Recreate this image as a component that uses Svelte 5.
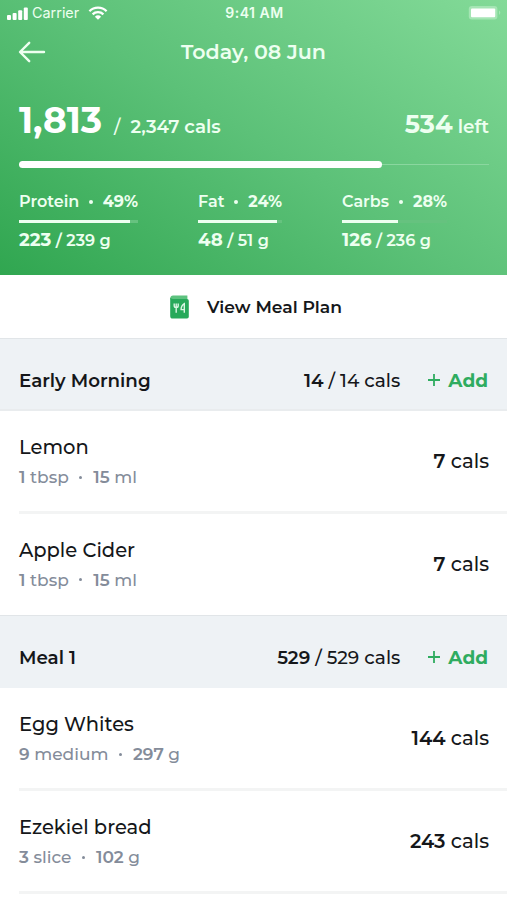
<script lang="ts">
    type Macro = {
        name: string;
        percent: number;
        value: number;
        goal: number;
        fill: number;
    };

    type Food = {
        name: string;
        amount: number;
        unit: string;
        size: number;
        sizeUnit: string;
        cals: number;
    };

    type Meal = {
        name: string;
        cals: number;
        goal: number;
        foods: Food[];
    };

    const macros: Macro[] = [
        { name: "Protein", percent: 49, value: 223, goal: 239, fill: 93.5 },
        { name: "Fat", percent: 24, value: 48, goal: 51, fill: 94 },
        { name: "Carbs", percent: 28, value: 126, goal: 236, fill: 53.4 },
    ];

    const meals: Meal[] = [
        {
            name: "Early Morning",
            cals: 14,
            goal: 14,
            foods: [
                { name: "Lemon", amount: 1, unit: "tbsp", size: 15, sizeUnit: "ml", cals: 7 },
                { name: "Apple Cider", amount: 1, unit: "tbsp", size: 15, sizeUnit: "ml", cals: 7 },
            ],
        },
        {
            name: "Meal 1",
            cals: 529,
            goal: 529,
            foods: [
                { name: "Egg Whites", amount: 9, unit: "medium", size: 297, sizeUnit: "g", cals: 144 },
                { name: "Ezekiel bread", amount: 3, unit: "slice", size: 102, sizeUnit: "g", cals: 243 },
            ],
        },
    ];

    const eaten = 1813;
    const target = 2347;
    const format = (value: number) => value.toLocaleString("en-US");
</script>

<div class="screen">
    <header class="summary">
        <div class="status-bar">
            <div class="carrier">
                <svg class="signal" viewBox="0 0 21 13" aria-hidden="true">
                    <rect x="0" y="8" width="4" height="5" rx="1" />
                    <rect x="5.6" y="6" width="4" height="7" rx="1" />
                    <rect x="11.2" y="3.2" width="4" height="9.8" rx="1" />
                    <rect x="16.8" y="0.5" width="4" height="12.5" rx="1" />
                </svg>
                <span>Carrier</span>
                <svg class="wifi" viewBox="0 0 20 14" aria-hidden="true">
                    <path d="M1.4 5.2a12.3 12.3 0 0 1 17.2 0" />
                    <path d="M4.6 8.3a7.8 7.8 0 0 1 10.8 0" />
                    <path class="dot" d="M6.9 10.7a4.6 4.6 0 0 1 6.2 0L10 13.8z" />
                </svg>
            </div>
            <span class="clock">9:41 AM</span>
            <svg class="battery" viewBox="0 0 34 16" aria-hidden="true">
                <rect class="case" x="0.8" y="1" width="28.6" height="13.4" rx="3" />
                <rect x="3" y="3.4" width="24.2" height="8.8" rx="1" />
                <path class="tip" d="M31 5.6q2.6 2 0 4.4z" />
            </svg>
        </div>

        <div class="title-bar">
            <button type="button" class="back" aria-label="Back">
                <svg viewBox="0 0 28 22" aria-hidden="true">
                    <path d="M26 11H2.4M11.2 1.8 2 11l9.2 9.2" />
                </svg>
            </button>
            <h1>Today, 08 Jun</h1>
        </div>

        <div class="totals">
            <p><strong class="eaten">{format(eaten)}</strong><span class="slash">/</span><span class="target">{format(target)} cals</span></p>
            <p class="left"><strong>{target - eaten}</strong> left</p>
        </div>
        <div class="progress">
            <div class="progress-fill" style:width="{(eaten / target) * 100}%"></div>
        </div>

        <div class="macros">
            {#each macros as macro}
                <div class="macro">
                    <p class="macro-label">{macro.name}<i></i><strong>{macro.percent}%</strong></p>
                    <div class="macro-track">
                        <div class="macro-fill" style:width="{macro.fill}%"></div>
                    </div>
                    <p class="macro-value"><strong>{macro.value}</strong> / {macro.goal} g</p>
                </div>
            {/each}
        </div>
    </header>

    <button type="button" class="meal-plan">
        <svg viewBox="0 0 19 24" aria-hidden="true">
            <path class="cover-back" d="M3 0.4h14.4v4H0.4V3A2.6 2.6 0 0 1 3 0.4z" />
            <path class="cover" d="M0.2 2.6Q0.8 4 2.8 4H17a1.8 1.8 0 0 1 1.8 1.8v16A1.8 1.8 0 0 1 17 23.6H2.8A2.6 2.6 0 0 1 0.2 21z" />
            <path class="cutlery" d="M4.2 8.6v2.2q0 1.8 2 1.8t2-1.8V8.6M6.2 8.6v9.2M14.3 17.8V8.6q-3.2 1.8-3.2 6h3.2" />
        </svg>
        <span>View Meal Plan</span>
    </button>

    {#each meals as meal}
        <section class="meal">
            <div class="meal-header">
                <h2>{meal.name}</h2>
                <span class="meal-cals"><strong>{meal.cals}</strong> / {meal.goal} cals</span>
                <button type="button" class="add">
                    <svg viewBox="0 0 12 12" aria-hidden="true">
                        <path d="M6 0v12M0 6h12" />
                    </svg>
                    <span>Add</span>
                </button>
            </div>
            <ul>
                {#each meal.foods as food}
                    <li>
                        <div>
                            <h3>{food.name}</h3>
                            <p class="portion">
                                <strong>{food.amount}</strong> {food.unit}<i></i><strong>{food.size}</strong> {food.sizeUnit}
                            </p>
                        </div>
                        <span class="food-cals"><strong>{food.cals}</strong> cals</span>
                    </li>
                {/each}
            </ul>
        </section>
    {/each}
</div>

<style>
    :global(body) {
        margin: 0;
        overflow: hidden;
        background: #fff;
    }

    .screen {
        width: 100%;
        height: 900px;
        overflow: hidden;
        font-family: Montserrat, Inter, sans-serif;
        font-weight: 500;
        color: #15171a;
        background: #fff;
    }

    h1,
    h2,
    h3,
    p,
    ul {
        margin: 0;
        padding: 0;
        font-weight: 500;
    }

    button {
        padding: 0;
        border: 0;
        background: none;
        font: inherit;
        color: inherit;
    }

    svg {
        display: block;
        flex: none;
    }

    .summary {
        box-sizing: border-box;
        height: 275px;
        color: #edfff0;
        background: linear-gradient(33deg, #30a650 0%, #5cc178 50%, #83da98 100%);
    }

    .status-bar {
        display: grid;
        grid-template-columns: 1fr auto 1fr;
        align-items: center;
        height: 26px;
        padding: 0 5px 0 7px;
        font-family: Inter, sans-serif;
        font-size: 14.4px;
        font-weight: 400;
        line-height: 26px;
    }

    .carrier {
        display: flex;
        align-items: center;
    }

    .signal {
        width: 21px;
        height: 13px;
        margin-right: 4px;
        fill: #fff;
    }

    .wifi {
        width: 20px;
        height: 14px;
        margin-left: 9px;
        fill: none;
        stroke: #fff;
        stroke-width: 2.3;
    }

    .wifi .dot {
        fill: #fff;
        stroke: none;
    }

    .clock {
        font-weight: 600;
        font-size: 14px;
        letter-spacing: 0.5px;
    }

    .battery {
        justify-self: end;
        width: 34px;
        height: 16px;
        fill: #fff;
    }

    .battery .case {
        fill: #a5e5b4;
    }

    .battery .tip {
        fill: #a5e5b4;
    }

    .title-bar {
        display: grid;
        grid-template-columns: 28px 1fr 28px;
        align-items: center;
        height: 52px;
        padding: 0 18px;
    }

    .back svg {
        width: 28px;
        height: 22px;
        fill: none;
        stroke: currentColor;
        stroke-width: 2.4;
        stroke-linecap: round;
        stroke-linejoin: round;
    }

    h1 {
        padding-bottom: 2px;
        font-size: 20.6px;
        font-weight: 600;
        text-align: center;
    }

    .totals {
        display: flex;
        align-items: baseline;
        justify-content: space-between;
        height: 60px;
        padding: 20px 18px 0 19px;
        box-sizing: border-box;
    }

    .eaten {
        font-size: 36px;
        line-height: 44px;
        font-weight: 700;
        color: #fff;
    }

    .slash {
        margin: 0 10px 0 12px;
        font-size: 18px;
    }

    .target {
        font-size: 18.3px;
        font-weight: 600;
    }

    .left {
        font-size: 18.4px;
        font-weight: 600;
    }

    .left strong {
        font-size: 25.6px;
        font-weight: 700;
    }

    .progress {
        display: flex;
        align-items: center;
        height: 7px;
        margin: 23px 18px 0 19px;
        background: linear-gradient(#8ad79f, #8ad79f) center / 100% 1px no-repeat;
    }

    .progress-fill {
        height: 7px;
        border-radius: 4px;
        background: #fff;
    }

    .macros {
        display: grid;
        grid-template-columns: 119px 84px 105px;
        column-gap: 60px;
        padding: 23px 0 0 19px;
    }

    .macro-label {
        display: flex;
        align-items: center;
        justify-content: space-between;
        font-size: 16px;
        font-weight: 600;
        line-height: 22px;
        white-space: nowrap;
    }

    .macro-label i {
        width: 4px;
        height: 4px;
        border-radius: 50%;
        background: currentColor;
    }

    .macro-label strong {
        font-weight: 700;
    }

    .macro-track {
        height: 3px;
        margin-top: 7px;
        background: #66c27f;
    }

    .macro-fill {
        height: 3px;
        background: #edfff0;
    }

    .macro-value {
        margin-top: 6px;
        font-size: 16.1px;
        font-weight: 600;
        line-height: 22px;
        white-space: nowrap;
    }

    .macro-value strong {
        font-size: 18.3px;
        font-weight: 700;
    }

    .meal-plan {
        display: flex;
        align-items: center;
        width: 100%;
        height: 63px;
        padding-left: 170px;
    }

    .meal-plan svg {
        width: 19px;
        height: 24px;
        margin-right: 18px;
    }

    .meal-plan .cover-back {
        fill: #5dc27f;
    }

    .meal-plan .cover {
        fill: #27a95a;
    }

    .meal-plan .cutlery {
        fill: none;
        stroke: #d9f5e2;
        stroke-width: 1.4;
    }

    .meal-plan span {
        font-size: 17.2px;
        font-weight: 600;
    }

    .meal-header {
        display: flex;
        align-items: center;
        box-sizing: border-box;
        height: 73px;
        padding: 10px 19px 0 19px;
        border-top: 1px solid #e1e5e8;
        background: #eef2f5;
    }

    .meal:first-of-type .meal-header {
        padding-top: 12px;
        border-bottom: 2px solid #e9ecee;
    }

    h2 {
        flex: 1;
        font-size: 18.3px;
        font-weight: 600;
    }

    .meal-cals {
        font-size: 18.5px;
    }

    strong {
        font-weight: 600;
    }

    .add {
        display: flex;
        align-items: center;
        margin-left: 28px;
        color: #2fac60;
        font-size: 18.5px;
        font-weight: 700;
    }

    .add svg {
        width: 12px;
        height: 12px;
        margin-right: 8px;
        fill: none;
        stroke: currentColor;
        stroke-width: 1.8;
    }

    ul {
        list-style: none;
    }

    li {
        display: flex;
        align-items: center;
        justify-content: space-between;
        box-sizing: border-box;
        height: 103px;
        margin-left: 19px;
        padding-right: 18px;
        border-bottom: 3px solid #f3f4f4;
    }

    .meal:first-of-type li:last-child {
        height: 101px;
        padding-bottom: 2px;
        border-bottom: 0;
    }

    h3 {
        font-size: 19.5px;
        line-height: 28px;
    }

    .portion {
        display: flex;
        align-items: center;
        margin-top: 4px;
        font-size: 17px;
        line-height: 24px;
        white-space: pre;
        color: #848c9a;
    }

    .portion i {
        width: 3px;
        height: 3px;
        margin: 0 11px 0 10.5px;
        border-radius: 50%;
        background: currentColor;
    }

    .food-cals {
        font-size: 19.6px;
    }
</style>
